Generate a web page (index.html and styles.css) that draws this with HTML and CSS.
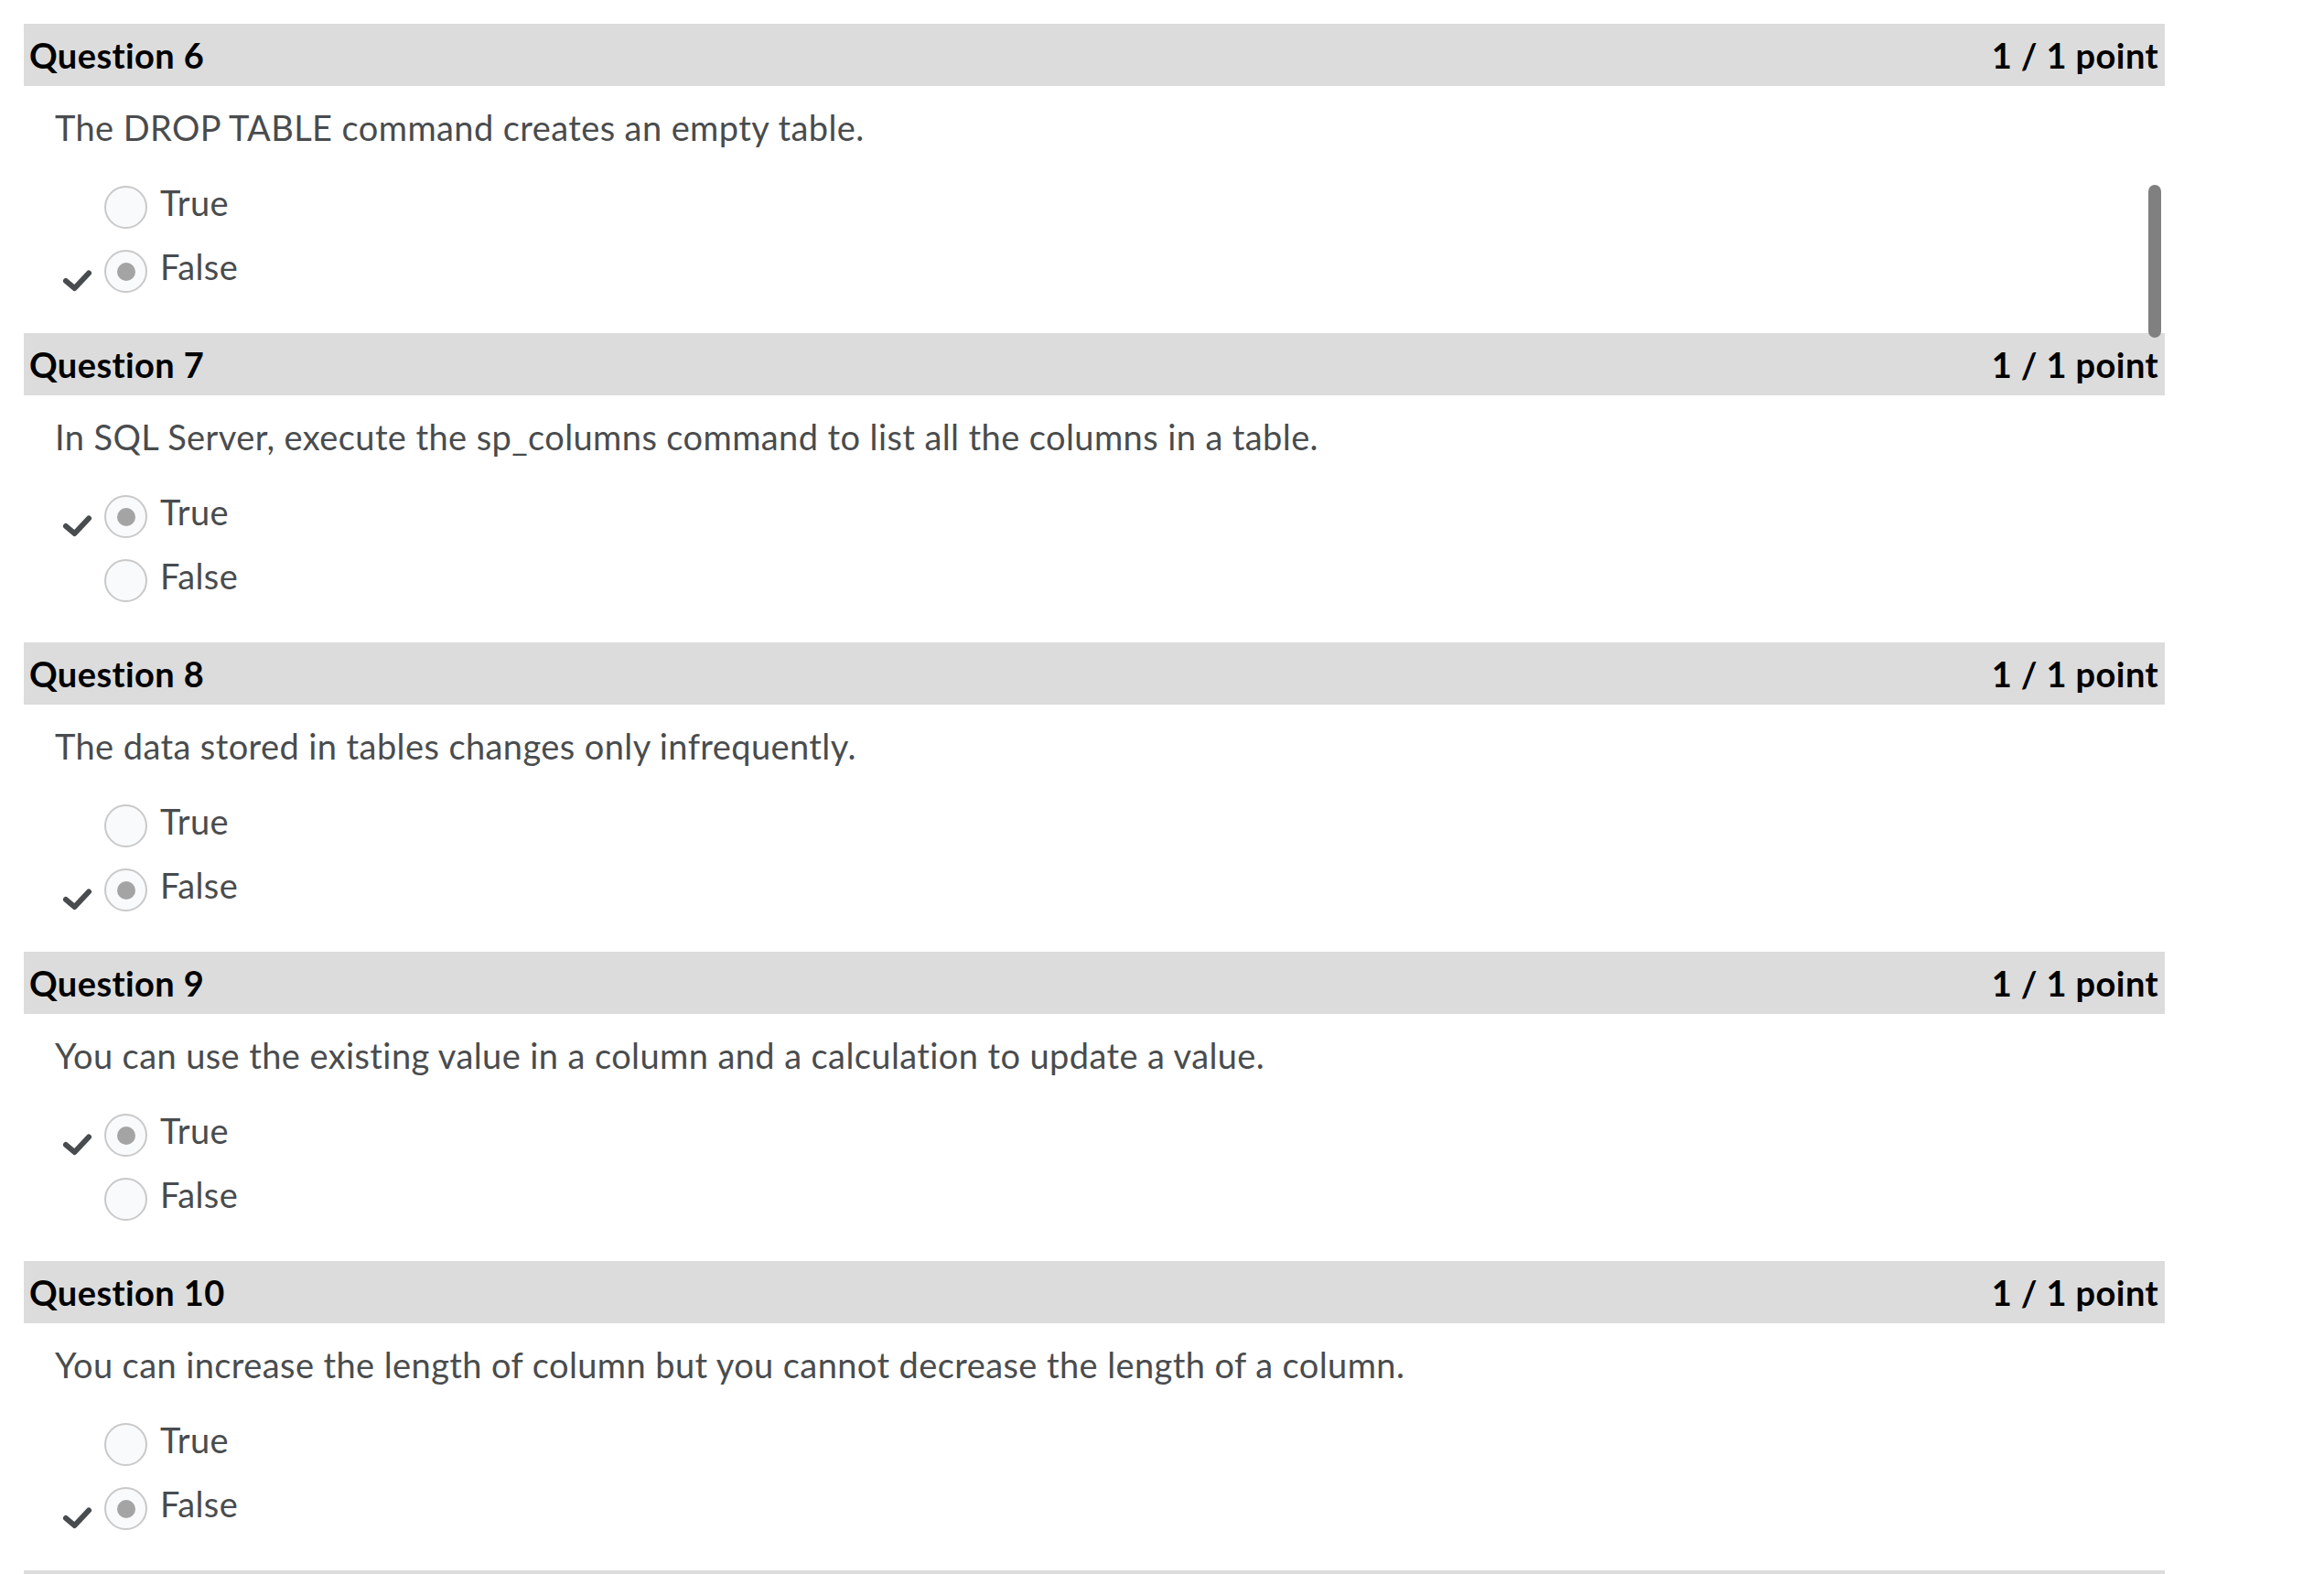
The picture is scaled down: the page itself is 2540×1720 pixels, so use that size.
FILE: index.html
```html
<!DOCTYPE html>
<html lang="en">
<head>
<meta charset="utf-8">
<title>Quiz Results</title>
<link rel="stylesheet" href="styles.css">
</head>
<body>
<div class="quiz">
  <section class="question">
    <div class="q-header"><span>Question 6</span><span>1 / 1 point</span></div>
    <p class="q-text">The DROP TABLE command creates an empty table.</p>
    <div class="options">
      <div class="option"><span class="mark"></span><span class="radio"></span><span class="label">True</span></div>
      <div class="option"><span class="mark"><svg viewBox="0 0 34 26" width="34" height="26"><path d="M5 14 L14.5 22 L30 5.5" /></svg></span><span class="radio checked"></span><span class="label">False</span></div>
    </div>
  </section>
  <section class="question">
    <div class="q-header"><span>Question 7</span><span>1 / 1 point</span></div>
    <p class="q-text">In SQL Server, execute the sp_columns command to list all the columns in a table.</p>
    <div class="options">
      <div class="option"><span class="mark"><svg viewBox="0 0 34 26" width="34" height="26"><path d="M5 14 L14.5 22 L30 5.5" /></svg></span><span class="radio checked"></span><span class="label">True</span></div>
      <div class="option"><span class="mark"></span><span class="radio"></span><span class="label">False</span></div>
    </div>
  </section>
  <section class="question">
    <div class="q-header"><span>Question 8</span><span>1 / 1 point</span></div>
    <p class="q-text">The data stored in tables changes only infrequently.</p>
    <div class="options">
      <div class="option"><span class="mark"></span><span class="radio"></span><span class="label">True</span></div>
      <div class="option"><span class="mark"><svg viewBox="0 0 34 26" width="34" height="26"><path d="M5 14 L14.5 22 L30 5.5" /></svg></span><span class="radio checked"></span><span class="label">False</span></div>
    </div>
  </section>
  <section class="question">
    <div class="q-header"><span>Question 9</span><span>1 / 1 point</span></div>
    <p class="q-text">You can use the existing value in a column and a calculation to update a value.</p>
    <div class="options">
      <div class="option"><span class="mark"><svg viewBox="0 0 34 26" width="34" height="26"><path d="M5 14 L14.5 22 L30 5.5" /></svg></span><span class="radio checked"></span><span class="label">True</span></div>
      <div class="option"><span class="mark"></span><span class="radio"></span><span class="label">False</span></div>
    </div>
  </section>
  <section class="question">
    <div class="q-header"><span>Question 10</span><span>1 / 1 point</span></div>
    <p class="q-text">You can increase the length of column but you cannot decrease the length of a column.</p>
    <div class="options">
      <div class="option"><span class="mark"></span><span class="radio"></span><span class="label">True</span></div>
      <div class="option"><span class="mark"><svg viewBox="0 0 34 26" width="34" height="26"><path d="M5 14 L14.5 22 L30 5.5" /></svg></span><span class="radio checked"></span><span class="label">False</span></div>
    </div>
  </section>
  <section class="question">
    <div class="q-header"></div>
  </section>
</div>
<div class="scroll-thumb"></div>
</body>
</html>
```
FILE: styles.css
```css
html, body {
  margin: 0;
  padding: 0;
  background: #ffffff;
}
body {
  font-family: Lato, "Noto Sans", "Liberation Sans", sans-serif;
  height: 1720px;
  overflow: hidden;
}
.quiz {
  padding: 26px 0 0 26px;
  width: 2340px;
}
.question {
  display: flex;
  flex-direction: column;
}
.q-header {
  height: 68px;
  flex: 0 0 68px;
  background: #dcdcdc;
  display: flex;
  align-items: center;
  justify-content: space-between;
  padding: 0 7px 0 6px;
  font-weight: 700;
  font-size: 38px;
  letter-spacing: 0.4px;
  line-height: 44px;
  color: #000000;
}
.q-text {
  margin: 23px 0 0 0;
  padding-left: 34px;
  font-size: 38px;
  letter-spacing: 0.4px;
  line-height: 44px;
  color: #494c4e;
}
.options {
  margin-top: 42px;
  padding-bottom: 44px;
  display: flex;
  flex-direction: column;
  gap: 23px;
}
.option {
  display: flex;
  align-items: flex-start;
  height: 47px;
  padding-left: 41px;
}
.mark {
  width: 47px;
  height: 47px;
  flex: 0 0 47px;
  display: flex;
  align-items: flex-end;
}
.mark svg {
  display: block;
  margin-bottom: 1px;
}
.mark path {
  fill: none;
  stroke: #494c4e;
  stroke-width: 6;
  stroke-linecap: round;
  stroke-linejoin: round;
}
.radio {
  width: 47px;
  height: 47px;
  flex: 0 0 47px;
  box-sizing: border-box;
  border: 2px solid #c9c9c9;
  border-radius: 50%;
  background: #f9fafc;
  display: flex;
  align-items: center;
  justify-content: center;
}
.radio.checked::after {
  content: "";
  width: 20px;
  height: 20px;
  border-radius: 50%;
  background: #a4a4a4;
}
.label {
  margin-left: 14px;
  margin-top: -5px;
  font-size: 38px;
  letter-spacing: 0.4px;
  line-height: 47px;
  color: #494c4e;
}
.scroll-thumb {
  position: absolute;
  left: 2348px;
  top: 202px;
  width: 14px;
  height: 167px;
  border-radius: 7px;
  background: #808080;
}
```
